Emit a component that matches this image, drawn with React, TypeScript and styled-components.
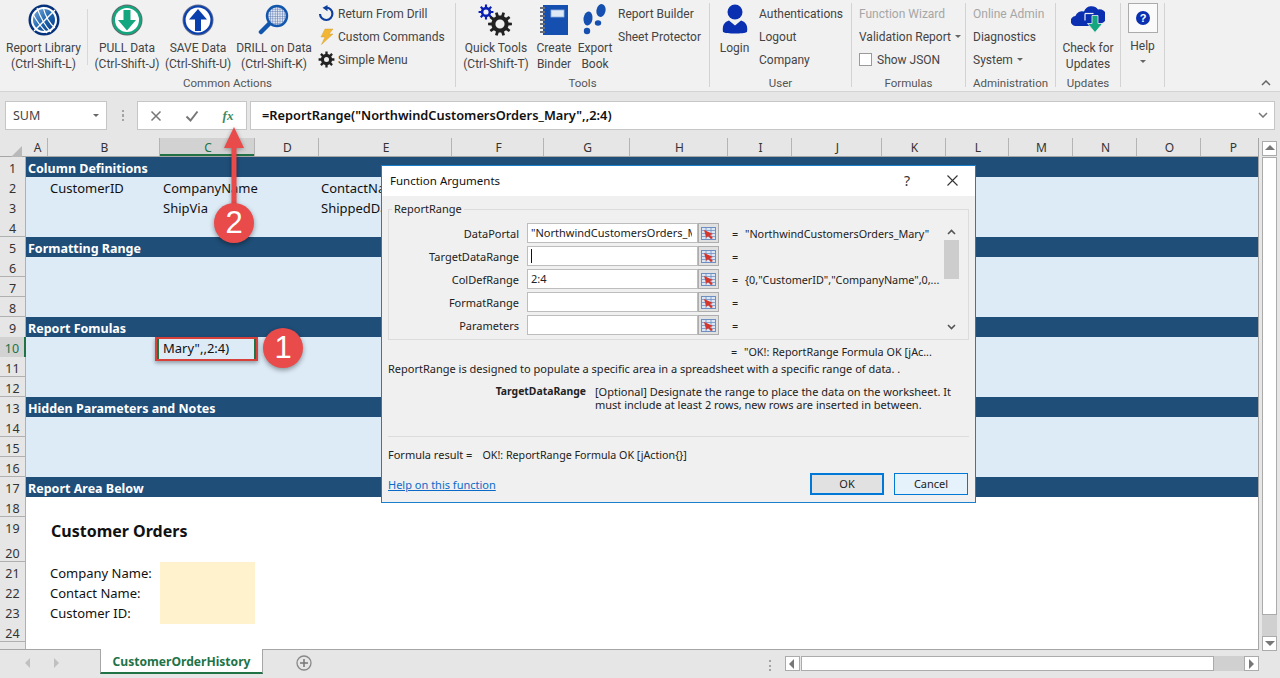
import React from "react";
import styled, { createGlobalStyle } from "styled-components";

const UI_FONT = `"Noto Sans", "Open Sans", sans-serif`;
const RIBBON_FONT = `Roboto, "Noto Sans", sans-serif`;
const BLUE = "#0a3fae";
const TEAL = "#14a67f";

const GlobalStyle = createGlobalStyle`
  html, body {
    margin: 0;
    padding: 0;
    height: 100%;
    overflow: hidden;
    background: #e6e6e6;
    font-family: ${UI_FONT};
  }
  * { box-sizing: border-box; }
`;

/* ---------- icons ---------- */

const gearPath = (cx: number, cy: number, outer: number, inner: number, hole: number, teeth: number) => {
  let d = "";
  const step = (Math.PI * 2) / teeth;
  for (let i = 0; i < teeth; i++) {
    const a = i * step;
    const pts = [
      [inner, a - step * 0.5],
      [inner, a - step * 0.27],
      [outer, a - step * 0.18],
      [outer, a + step * 0.18],
      [inner, a + step * 0.27],
    ];
    pts.forEach(([r, t], j) => {
      const x = (cx + r * Math.cos(t)).toFixed(2);
      const y = (cy + r * Math.sin(t)).toFixed(2);
      d += `${i === 0 && j === 0 ? "M" : "L"}${x} ${y} `;
    });
  }
  d += `Z M${cx + hole} ${cy} A${hole} ${hole} 0 1 0 ${cx - hole} ${cy} A${hole} ${hole} 0 1 0 ${cx + hole} ${cy} Z`;
  return d;
};

const GlobeIcon = () => (
  <svg width="32" height="32" viewBox="0 0 32 32">
    <defs>
      <linearGradient id="globeFill" x1="0" y1="0" x2="1" y2="1">
        <stop offset="0" stopColor="#7fb2e0" />
        <stop offset="0.55" stopColor="#1c62ad" />
        <stop offset="1" stopColor="#06357f" />
      </linearGradient>
    </defs>
    <circle cx="16" cy="16" r="15.5" fill="#06327c" />
    <circle cx="16" cy="16" r="12" fill="url(#globeFill)" stroke="#fff" strokeWidth="2" />
    <g stroke="#fff" strokeWidth="1.1" fill="none">
      <path d="M9 4c3 8 8 18 14 24" />
      <path d="M15 3c2 8 6 16 12 21" />
      <path d="M5 10c4 8 9 14 14 19" />
      <path d="M27 6L6 27" strokeWidth="1.4" />
    </g>
  </svg>
);

const PullIcon = () => (
  <svg width="32" height="32" viewBox="0 0 32 32">
    <circle cx="16" cy="16" r="15.5" fill="#5f6b68" />
    <circle cx="16" cy="16" r="14.6" fill={TEAL} />
    <circle cx="16" cy="16" r="12" fill="#fff" />
    <path d="M12.5 6h7v10h5.5L16 26.5 7 16h5.5z" fill={TEAL} />
  </svg>
);

const SaveIcon = () => (
  <svg width="32" height="32" viewBox="0 0 32 32">
    <circle cx="16" cy="16" r="15.5" fill="#5c6a8c" />
    <circle cx="16" cy="16" r="14.6" fill="#0a3fae" />
    <circle cx="16" cy="16" r="12.4" fill="#fff" />
    <path d="M13 27V15.5H7L16 5l9 10.5h-6V27z" fill={BLUE} />
  </svg>
);

const DrillIcon = () => (
  <svg width="32" height="32" viewBox="0 0 32 32">
    <defs>
      <pattern id="mesh" width="2.4" height="2.4" patternUnits="userSpaceOnUse">
        <rect width="2.4" height="2.4" fill="#dfe6f2" />
        <path d="M0 0h2.4M0 0v2.4" stroke="#4f6fae" strokeWidth="0.9" />
      </pattern>
    </defs>
    <path d="M11 20L3 28" stroke="#1257ad" strokeWidth="4.5" strokeLinecap="round" />
    <circle cx="19" cy="12" r="10" fill="url(#mesh)" stroke="#1257ad" strokeWidth="2.4" />
  </svg>
);

const ReturnIcon = () => (
  <svg width="17" height="17" viewBox="0 0 17 17" fill="none">
    <path d="M8 2.6a6.2 6.2 0 1 1-6 6.4" stroke="#0f3f9e" strokeWidth="2.2" />
    <path d="M9.5 0L4.5 2.8l5 3.4z" fill="#0f3f9e" />
  </svg>
);

const BoltIcon = () => (
  <svg width="17" height="17" viewBox="0 0 17 17">
    <path d="M7 1h8l-4 5h4L3.5 16.5 7 9H3z" fill="#f2b632" stroke="#c9962a" strokeWidth="0.4" />
  </svg>
);

const CogIcon = () => (
  <svg width="17" height="17" viewBox="0 0 17 17">
    <path fillRule="evenodd" d={gearPath(8.5, 8.5, 8, 5.6, 2.5, 8)} fill="#222" />
  </svg>
);

const ToolsIcon = () => (
  <svg width="36" height="34" viewBox="0 0 36 34">
    <path fillRule="evenodd" d={gearPath(8, 8, 7.5, 5.2, 2.6, 8)} fill="#0a1fb4" />
    <path fillRule="evenodd" d={gearPath(22, 20, 12, 8.6, 4.6, 10)} fill="#222" />
  </svg>
);

const BinderIcon = () => (
  <svg width="30" height="32" viewBox="0 0 30 32">
    <rect x="4" y="1" width="25" height="30" fill="#1550b0" />
    <rect x="12" y="6" width="13" height="7" fill="#dfe8f5" stroke="#8fb0de" strokeWidth="0.8" />
    {[4, 8, 12, 16, 20, 24, 28].map((y) => (
      <rect key={y} x="1" y={y - 1} width="5" height="2" fill="#6b6f78" />
    ))}
  </svg>
);

const StepsIcon = () => (
  <svg width="26" height="32" viewBox="0 0 26 32" fill="#1550b0">
    <ellipse cx="6" cy="14.5" rx="4.5" ry="7" transform="rotate(8 6 14.5)" />
    <ellipse cx="5" cy="27" rx="3.2" ry="3.2" />
    <ellipse cx="19" cy="6.5" rx="4.5" ry="6.5" transform="rotate(12 19 6.5)" />
    <ellipse cx="16" cy="19" rx="3.2" ry="2.8" />
  </svg>
);

const UserIcon = () => (
  <svg width="26" height="30" viewBox="0 0 26 30" fill="#0a2fb0">
    <circle cx="13" cy="8" r="7.5" />
    <path d="M1 28c-1-6 1-10 6-11.5l6 5 6-5c5 1.5 7 5.5 6 11.5-3 2-21 2-24 0z" />
  </svg>
);

const CloudIcon = () => (
  <svg width="34" height="30" viewBox="0 0 34 30">
    <path d="M5 22a5 5 0 0 1-.6-10A7 7 0 0 1 13 7.5 8 8 0 0 1 27 5.5a7 7 0 0 1 3 14V22z" fill="#0a2fb0" />
    <path d="M14 9.5h8.5" stroke="#f1f1f1" strokeWidth="1.2" />
    <path d="M14 9.5v7" stroke="#f1f1f1" strokeWidth="1.2" />
    <path d="M21 11.5h6v8h4.5L24 28.5 16.5 19.5H21z" fill={TEAL} stroke="#f1f1f1" strokeWidth="0.8" />
  </svg>
);

const HelpIcon = () => (
  <svg width="16" height="16" viewBox="0 0 16 16">
    <circle cx="8" cy="8" r="7" fill="#0a2fb0" />
    <text x="8" y="12" textAnchor="middle" fontSize="11" fontWeight="700" fill="#fff" fontFamily="Liberation Sans, sans-serif">?</text>
  </svg>
);

const RangeIcon = () => (
  <svg width="15" height="13" viewBox="0 0 15 13">
    <rect x="0.5" y="0.5" width="14" height="12" fill="#dbe6f4" stroke="#6e8fc2" />
    <path d="M0 3.5h15M0 6.5h15M0 9.5h15M5 0v13M10 0v13" stroke="#6e8fc2" strokeWidth="0.8" />
    <path d="M3 3l9 4-3 1 3 3-2 1-3-3-1.5 2z" fill="#d5352a" />
  </svg>
);

const Chevron = ({ up }: { up?: boolean }) => (
  <svg width="9" height="6" viewBox="0 0 9 6">
    <path d={up ? "M1 5l3.5-3.5L8 5" : "M1 1l3.5 3.5L8 1"} fill="none" stroke="#555" strokeWidth="1.6" />
  </svg>
);

const Caret = styled.span`
  display: inline-block;
  width: 0;
  height: 0;
  margin-left: 1px;
  vertical-align: middle;
  border-left: 3px solid transparent;
  border-right: 3px solid transparent;
  border-top: 3px solid #666;
`;

/* ---------- ribbon ---------- */

const Ribbon = styled.div`
  position: relative;
  display: flex;
  height: 92px;
  padding-top: 3px;
  background: #f1f1f1;
  border-bottom: 1px solid #d4d4d4;
  color: #444;
  font-family: ${RIBBON_FONT};
  font-size: 12px;
`;

const Group = styled.div<{ $w: number }>`
  display: flex;
  flex-direction: column;
  flex: none;
  width: ${(p) => p.$w}px;
  height: 84px;
  border-right: 1px solid #d3d3d3;
`;

const GroupBody = styled.div<{ $pad?: number }>`
  display: flex;
  flex: 1;
  padding-left: ${(p) => p.$pad ?? 0}px;
`;

const GroupLabel = styled.div`
  height: 16px;
  margin-bottom: -4px;
  line-height: 16px;
  text-align: center;
  font-size: 11.5px;
  color: #555;
`;

const LargeButton = styled.div<{ $w: number }>`
  display: flex;
  flex-direction: column;
  align-items: center;
  flex: none;
  width: ${(p) => p.$w}px;
  white-space: nowrap;
`;

const LargeIcon = styled.div`
  display: flex;
  align-items: flex-start;
  justify-content: center;
  height: 36px;
  padding-top: 1px;
  margin-bottom: 1px;
`;

const LargeLine = styled.div`
  height: 16px;
  line-height: 16px;
  text-align: center;
`;

const InnerSep = styled.div`
  flex: none;
  width: 1px;
  height: 56px;
  margin-top: 6px;
  background: #d8d8d8;
`;

const SmallColumn = styled.div`
  display: flex;
  flex-direction: column;
  margin-top: -1px;
  white-space: nowrap;
`;

const SmallItem = styled.div<{ $disabled?: boolean }>`
  display: flex;
  align-items: center;
  gap: 3px;
  height: 23px;
  color: ${(p) => (p.$disabled ? "#a6a6a6" : "#444")};
`;

const Checkbox = styled.span`
  display: inline-block;
  width: 13px;
  height: 13px;
  margin-right: 2px;
  background: #fff;
  border: 1px solid #9a9a9a;
`;

const HelpColumn = styled.div`
  display: flex;
  flex-direction: column;
  align-items: center;
  width: 43px;
`;

const HelpBox = styled.div`
  display: flex;
  align-items: center;
  justify-content: center;
  width: 30px;
  height: 30px;
  background: #fafafa;
  border: 1px solid #ababab;
`;

const HelpLabel = styled.div`
  margin-top: 5px;
  line-height: 16px;
`;

const HelpCaret = styled(Caret)`
  margin: 6px 0 0;
`;

const CollapseArrow = styled.svg`
  position: absolute;
  right: 9px;
  bottom: 5px;
`;

/* ---------- formula bar ---------- */

const FormulaBar = styled.div`
  display: flex;
  align-items: stretch;
  height: 46px;
  padding: 9px 5px 8px;
  background: #e6e6e6;
`;

const NameBox = styled.div`
  display: flex;
  align-items: center;
  justify-content: space-between;
  width: 102px;
  padding: 0 7px;
  background: #fff;
  border: 1px solid #c6c6c6;
  color: #444;
  font-size: 12.5px;
`;

const GripDots = styled.div`
  width: 2px;
  height: 11px;
  margin: auto 13px auto 15px;
  background: repeating-linear-gradient(#a3a3a3 0 2px, transparent 2px 4.5px);
`;

const FormulaButtons = styled.div`
  display: flex;
  align-items: center;
  width: 110px;
  margin-right: 3px;
  background: #fff;
  border: 1px solid #c6c6c6;
`;

const FormulaBtn = styled.div`
  display: flex;
  align-items: center;
  justify-content: center;
  flex: 1;
  color: #777;
`;

const FxLabel = styled.span`
  color: #3f8a5e;
  font-family: "Liberation Serif", serif;
  font-style: italic;
  font-weight: 700;
  font-size: 13px;
`;

const FormulaInput = styled.div`
  display: flex;
  align-items: center;
  justify-content: space-between;
  flex: 1;
  padding: 0 6px 2px 11px;
  background: #fff;
  border: 1px solid #c6c6c6;
  color: #111;
  font-size: 12.8px;
  font-weight: 600;
`;

/* ---------- sheet ---------- */

const COLS: [string, number][] = [
  ["A", 22], ["B", 112], ["C", 95], ["D", 64], ["E", 133], ["F", 92], ["G", 86], ["H", 98],
  ["I", 64], ["J", 90], ["K", 64], ["L", 63], ["M", 64], ["N", 64], ["O", 64], ["P", 64],
];

const SheetArea = styled.div`
  display: flex;
  height: 512px;
`;

const SheetMain = styled.div`
  flex: none;
  width: 1259px;
  overflow: hidden;
  border-right: 1px solid #a6a6a6;
  border-bottom: 1px solid #a6a6a6;
`;

const HeaderRow = styled.div`
  display: flex;
  height: 19px;
  border-bottom: 1px solid #a6a6a6;
`;

const Corner = styled.div`
  flex: none;
  width: 26px;
  padding: 3px 0 0 10px;
`;

const ColHead = styled.div<{ $w: number; $active?: boolean }>`
  flex: none;
  width: ${(p) => p.$w}px;
  padding-left: 2px;
  line-height: 20px;
  text-align: center;
  font-size: 12px;
  color: ${(p) => (p.$active ? "#217346" : "#333")};
  background: ${(p) => (p.$active ? "#d2d2d2" : "transparent")};
  border-right: 1px solid #b4b4b4;
  box-shadow: ${(p) => (p.$active ? "inset 0 -2px 0 #217346" : "none")};
`;

const Row = styled.div<{ $h: number; $kind: "band" | "light" | "plain" }>`
  display: grid;
  grid-template-columns: 26px 21px 113px 158px 1fr;
  height: ${(p) => p.$h}px;
  background: ${(p) => (p.$kind === "band" ? "#1f4e78" : p.$kind === "light" ? "#ddebf7" : "#fff")};
`;

const RowHead = styled.div<{ $active?: boolean }>`
  line-height: 24px;
  height: 100%;
  overflow: hidden;
  text-align: center;
  font-size: 12.5px;
  color: ${(p) => (p.$active ? "#217346" : "#333")};
  background: ${(p) => (p.$active ? "#d2d2d2" : "#e6e6e6")};
  border-bottom: 1px solid #b0b0b0;
  border-right: ${(p) => (p.$active ? "2px solid #217346" : "1px solid #b0b0b0")};
`;

const BandText = styled.div`
  grid-column: 2 / -1;
  padding-left: 2px;
  line-height: 24px;
  color: #fff;
  font-size: 12.5px;
  font-weight: 700;
  white-space: nowrap;
`;

const Cell = styled.div`
  padding-left: 3px;
  line-height: 22px;
  font-size: 13px;
  color: #111;
  white-space: nowrap;
`;

const TitleCell = styled(Cell)`
  padding-left: 4px;
  font-size: 16px;
  font-weight: 700;
  line-height: 28px;
`;

const SelectedCell = styled.div`
  position: relative;
  width: 95px;
  padding-left: 3px;
  line-height: 22px;
  font-size: 13px;
  color: #111;
  white-space: nowrap;
  &::after {
    content: "";
    position: absolute;
    inset: 0 -3px -2px -5px;
    border: 2px solid #d8403c;
    box-shadow: inset 2px 0 0 #217346, inset -2px 0 0 #217346, 0 2px 4px rgba(0, 0, 0, 0.35);
  }
`;

const YellowBlock = styled.div`
  width: 95px;
  height: 100%;
  background: #fff2cc;
`;

const VScroll = styled.div`
  display: flex;
  flex-direction: column;
  width: 15px;
  height: 510px;
  margin: 3px 0 0 3px;
`;

const ScrollBtn = styled.div`
  display: flex;
  align-items: center;
  justify-content: center;
  flex: none;
  width: 15px;
  height: 15px;
  background: #fff;
  border: 1px solid #ababab;
`;

const VThumb = styled.div`
  flex: 459 0 0;
  margin-top: 1px;
  background: #fff;
  border: 1px solid #ababab;
`;

const VTrack = styled.div`
  flex: 21 0 0;
  background: #d0d0d0;
`;

/* ---------- sheet tabs ---------- */

const TabBar = styled.div`
  display: flex;
  align-items: flex-start;
  height: 28px;
  background: #e6e6e6;
`;

const TabNav = styled.div`
  display: flex;
  align-items: center;
  gap: 18px;
  width: 100px;
  height: 26px;
  padding-left: 24px;
`;

const Tab = styled.div`
  width: 163px;
  height: 25px;
  line-height: 25px;
  text-align: center;
  background: #fff;
  border-left: 1px solid #a6a6a6;
  border-right: 1px solid #a6a6a6;
  border-bottom: 2px solid #217346;
  margin-top: -1px;
  color: #217346;
  font-size: 12.1px;
  font-weight: 700;
`;

const AddSheet = styled.div`
  display: flex;
  align-items: center;
  width: 522px;
  height: 26px;
  padding-left: 33px;
`;

const HScrollGrip = styled(GripDots)`
  margin: 5px 14px 0 auto;
  height: 11px;
`;

const HScroll = styled.div`
  display: flex;
  align-items: stretch;
  width: 474px;
  height: 15px;
  margin-top: 6px;
`;

const HThumb = styled.div`
  width: 413px;
  background: #fff;
  border: 1px solid #ababab;
  margin-left: 1px;
`;

const HTrack = styled.div`
  flex: 1;
  background: #d0d0d0;
`;

/* ---------- dialog ---------- */

const Dialog = styled.div`
  position: absolute;
  left: 381px;
  top: 165px;
  width: 595px;
  height: 338px;
  display: flex;
  flex-direction: column;
  background: #f0f0f0;
  border: 1px solid #1b7fcc;
  color: #222;
  font-size: 11px;
`;

const DialogTitle = styled.div`
  display: flex;
  align-items: center;
  height: 30px;
  padding: 0 17px 2px 8px;
  background: #fff;
  color: #111;
  font-size: 11.5px;
`;

const DialogTitleText = styled.div`
  flex: 1;
`;

const TitleHelp = styled.div`
  width: 43px;
  font-size: 14px;
  color: #333;
`;

const DialogBody = styled.div`
  display: flex;
  flex-direction: column;
  flex: 1;
  padding: 13px 6px 0;
`;

const ArgsFrame = styled.div`
  position: relative;
  display: flex;
  height: 131px;
  padding: 13px 9px 0 0;
  border: 1px solid #dcdcdc;
`;

const ArgsLegend = styled.div`
  position: absolute;
  left: 3px;
  top: -8px;
  padding: 0 2px;
  line-height: 14px;
  background: #f0f0f0;
`;

const ArgsList = styled.div`
  display: flex;
  flex-direction: column;
  gap: 3px;
  flex: 1;
`;

const ArgRow = styled.div`
  display: grid;
  grid-template-columns: 130px 179px 21px 1fr;
  align-items: center;
  height: 20px;
`;

const ArgLabel = styled.div`
  text-align: right;
`;

const ArgInput = styled.div`
  height: 20px;
  margin-left: 8px;
  padding-left: 3px;
  line-height: 18px;
  background: #fff;
  border: 1px solid #bdbdbd;
`;

const ArgInputText = styled.div`
  width: 161px;
  overflow: hidden;
  white-space: nowrap;
`;

const TextCursor = styled.span`
  display: inline-block;
  width: 1px;
  height: 14px;
  margin-top: 2px;
  background: #111;
`;

const RangeBtn = styled.div`
  display: flex;
  align-items: center;
  justify-content: center;
  height: 20px;
  background: #e1e1e1;
  border: 1px solid #adadad;
`;

const ArgValue = styled.div`
  display: grid;
  grid-template-columns: 13px 1fr;
  padding-left: 13px;
  font-size: 10.8px;
  white-space: nowrap;
  overflow: hidden;
`;

const ArgScroll = styled.div`
  display: flex;
  flex-direction: column;
  align-items: center;
  width: 15px;
  height: 112px;
`;

const ArgThumb = styled.div`
  width: 15px;
  height: 39px;
  background: #cdcdcd;
`;

const ScrollChevron = styled.div`
  display: flex;
  align-items: center;
  justify-content: center;
  height: 17px;
`;

const ScrollSpacer = styled.div`
  flex: 1;
`;

const ResultLine = styled(ArgValue)`
  margin: 5px 0 0 330px;
  width: 250px;
  line-height: 14px;
`;

const Description = styled.div`
  margin-top: 2px;
  line-height: 16px;
`;

const ArgHelp = styled.div`
  display: grid;
  grid-template-columns: 198px 1fr;
  gap: 9px;
  margin-top: 8px;
  height: 51px;
  line-height: 13px;
`;

const ArgHelpName = styled.div`
  text-align: right;
  font-size: 10.4px;
  font-weight: 700;
`;

const Divider = styled.div`
  height: 1px;
  background: #dcdcdc;
`;

const FormulaResult = styled.div`
  display: flex;
  gap: 10px;
  margin-top: 11px;
  line-height: 14px;
`;

const ResultValue = styled.span`
  font-size: 10.7px;
`;

const DialogFoot = styled.div`
  display: flex;
  align-items: center;
  justify-content: space-between;
  margin-top: 11px;
  padding-right: 1px;
`;

const HelpLink = styled.div`
  color: #0b6ac8;
  text-decoration: underline;
`;

const FootButtons = styled.div`
  display: flex;
  gap: 10px;
`;

const DialogButton = styled.div<{ $primary?: boolean }>`
  width: 74px;
  height: 22px;
  line-height: 18px;
  text-align: center;
  background: ${(p) => (p.$primary ? "#e1e1e1" : "#e5f1fb")};
  border: ${(p) => (p.$primary ? "2px solid #0078d7" : "1px solid #0078d7")};
  padding-top: ${(p) => (p.$primary ? 0 : 1)}px;
`;

/* ---------- annotations ---------- */

const Callout = styled.div<{ $x: number; $y: number }>`
  position: absolute;
  left: ${(p) => p.$x - 20}px;
  top: ${(p) => p.$y - 20}px;
  width: 40px;
  height: 40px;
  line-height: 39px;
  text-align: center;
  border-radius: 50%;
  background: #e94b4b;
  box-shadow: 0 2px 5px rgba(0, 0, 0, 0.4);
  color: #fff;
  font-family: "Liberation Sans", sans-serif;
  font-size: 31px;
`;

const ArrowSvg = styled.svg`
  position: absolute;
  left: 219px;
  top: 124px;
  filter: drop-shadow(0 1px 2px rgba(0, 0, 0, 0.35));
`;

/* ---------- data ---------- */

type RowDef = { n: number; kind: "band" | "light" | "plain"; h?: number; text?: string };

const ROWS: RowDef[] = [
  { n: 1, kind: "band", text: "Column Definitions" },
  { n: 2, kind: "light" }, { n: 3, kind: "light" }, { n: 4, kind: "light" },
  { n: 5, kind: "band", text: "Formatting Range" },
  { n: 6, kind: "light" }, { n: 7, kind: "light" }, { n: 8, kind: "light" },
  { n: 9, kind: "band", text: "Report Fomulas" },
  { n: 10, kind: "light" }, { n: 11, kind: "light" }, { n: 12, kind: "light" },
  { n: 13, kind: "band", text: "Hidden Parameters and Notes" },
  { n: 14, kind: "light" }, { n: 15, kind: "light" }, { n: 16, kind: "light" },
  { n: 17, kind: "band", text: "Report Area Below" },
  { n: 18, kind: "plain" }, { n: 19, kind: "plain", h: 25 }, { n: 20, kind: "plain" },
  { n: 21, kind: "plain" }, { n: 22, kind: "plain" }, { n: 23, kind: "plain" }, { n: 24, kind: "plain" },
  { n: 25, kind: "plain" },
];

const ROW_CELLS: Record<number, [string, string, string]> = {
  2: ["CustomerID", "CompanyName", "ContactName"],
  3: ["", "ShipVia", "ShippedDate"],
};

const ARGS = [
  { label: "DataPortal", input: "\"NorthwindCustomersOrders_Mary\"", value: "\"NorthwindCustomersOrders_Mary\"" },
  { label: "TargetDataRange", input: "", cursor: true, value: "" },
  { label: "ColDefRange", input: "2:4", value: "{0,\"CustomerID\",\"CompanyName\",0,..." },
  { label: "FormatRange", input: "", value: "" },
  { label: "Parameters", input: "", value: "" },
];

const Tri = ({ dir, color = "#777" }: { dir: "up" | "down" | "left" | "right"; color?: string }) => {
  const pts = { up: "0,6 5,1 10,6", down: "0,2 10,2 5,7", left: "6,0 6,10 1,5", right: "2,0 2,10 7,5" }[dir];
  return (
    <svg width="10" height="10" viewBox="0 0 10 10">
      <polygon points={pts} fill={color} />
    </svg>
  );
};

const renderRowBody = (row: RowDef) => {
  if (row.kind === "band") return <BandText>{row.text}</BandText>;
  const base = ROW_CELLS[row.n];
  if (base) {
    return (
      <>
        <span />
        <Cell>{base[0]}</Cell>
        <Cell>{base[1]}</Cell>
        <Cell>{base[2]}</Cell>
      </>
    );
  }
  if (row.n === 10) {
    return (
      <>
        <span />
        <span />
        <SelectedCell>Mary",,2:4)</SelectedCell>
      </>
    );
  }
  if (row.n === 19) {
    return (
      <>
        <span />
        <TitleCell>Customer Orders</TitleCell>
      </>
    );
  }
  const labels: Record<number, string> = { 21: "Company Name:", 22: "Contact Name:", 23: "Customer ID:" };
  if (labels[row.n]) {
    return (
      <>
        <span />
        <Cell>{labels[row.n]}</Cell>
        <YellowBlock />
      </>
    );
  }
  return null;
};

export default function App() {
  return (
    <>
      <GlobalStyle />
      <Ribbon>
        <Group $w={456}>
          <GroupBody>
            <LargeButton $w={87}>
              <LargeIcon><GlobeIcon /></LargeIcon>
              <LargeLine>Report Library</LargeLine>
              <LargeLine>(Ctrl-Shift-L)</LargeLine>
            </LargeButton>
            <InnerSep />
            <LargeButton $w={78}>
              <LargeIcon><PullIcon /></LargeIcon>
              <LargeLine>PULL Data</LargeLine>
              <LargeLine>(Ctrl-Shift-J)</LargeLine>
            </LargeButton>
            <LargeButton $w={64}>
              <LargeIcon><SaveIcon /></LargeIcon>
              <LargeLine>SAVE Data</LargeLine>
              <LargeLine>(Ctrl-Shift-U)</LargeLine>
            </LargeButton>
            <LargeButton $w={88}>
              <LargeIcon><DrillIcon /></LargeIcon>
              <LargeLine>DRILL on Data</LargeLine>
              <LargeLine>(Ctrl-Shift-K)</LargeLine>
            </LargeButton>
            <SmallColumn>
              <SmallItem><ReturnIcon />Return From Drill</SmallItem>
              <SmallItem><BoltIcon />Custom Commands</SmallItem>
              <SmallItem><CogIcon />Simple Menu</SmallItem>
            </SmallColumn>
          </GroupBody>
          <GroupLabel>Common Actions</GroupLabel>
        </Group>

        <Group $w={254}>
          <GroupBody>
            <LargeButton $w={80}>
              <LargeIcon><ToolsIcon /></LargeIcon>
              <LargeLine>Quick Tools</LargeLine>
              <LargeLine>(Ctrl-Shift-T)</LargeLine>
            </LargeButton>
            <LargeButton $w={36}>
              <LargeIcon><BinderIcon /></LargeIcon>
              <LargeLine>Create</LargeLine>
              <LargeLine>Binder</LargeLine>
            </LargeButton>
            <LargeButton $w={46}>
              <LargeIcon><StepsIcon /></LargeIcon>
              <LargeLine>Export</LargeLine>
              <LargeLine>Book</LargeLine>
            </LargeButton>
            <SmallColumn>
              <SmallItem>Report Builder</SmallItem>
              <SmallItem>Sheet Protector</SmallItem>
            </SmallColumn>
          </GroupBody>
          <GroupLabel>Tools</GroupLabel>
        </Group>

        <Group $w={142}>
          <GroupBody>
            <LargeButton $w={49}>
              <LargeIcon><UserIcon /></LargeIcon>
              <LargeLine>Login</LargeLine>
            </LargeButton>
            <SmallColumn>
              <SmallItem>Authentications</SmallItem>
              <SmallItem>Logout</SmallItem>
              <SmallItem>Company</SmallItem>
            </SmallColumn>
          </GroupBody>
          <GroupLabel>User</GroupLabel>
        </Group>

        <Group $w={114}>
          <GroupBody $pad={7}>
            <SmallColumn>
              <SmallItem $disabled>Function Wizard</SmallItem>
              <SmallItem>Validation Report<Caret /></SmallItem>
              <SmallItem><Checkbox />Show JSON</SmallItem>
            </SmallColumn>
          </GroupBody>
          <GroupLabel>Formulas</GroupLabel>
        </Group>

        <Group $w={90}>
          <GroupBody $pad={7}>
            <SmallColumn>
              <SmallItem $disabled>Online Admin</SmallItem>
              <SmallItem>Diagnostics</SmallItem>
              <SmallItem>System<Caret /></SmallItem>
            </SmallColumn>
          </GroupBody>
          <GroupLabel>Administration</GroupLabel>
        </Group>

        <Group $w={65}>
          <GroupBody>
            <LargeButton $w={64}>
              <LargeIcon><CloudIcon /></LargeIcon>
              <LargeLine>Check for</LargeLine>
              <LargeLine>Updates</LargeLine>
            </LargeButton>
          </GroupBody>
          <GroupLabel>Updates</GroupLabel>
        </Group>

        <Group $w={44}>
          <HelpColumn>
            <HelpBox><HelpIcon /></HelpBox>
            <HelpLabel>Help</HelpLabel>
            <HelpCaret />
          </HelpColumn>
        </Group>

        <CollapseArrow width="10" height="6" viewBox="0 0 10 6">
          <path d="M1 5l4-4 4 4" fill="none" stroke="#666" strokeWidth="1.5" />
        </CollapseArrow>
      </Ribbon>

      <FormulaBar>
        <NameBox>SUM<Caret /></NameBox>
        <GripDots />
        <FormulaButtons>
          <FormulaBtn>
            <svg width="12" height="12" viewBox="0 0 12 12">
              <path d="M1.5 1.5l9 9M10.5 1.5l-9 9" stroke="#777" strokeWidth="1.5" />
            </svg>
          </FormulaBtn>
          <FormulaBtn>
            <svg width="14" height="12" viewBox="0 0 14 12">
              <path d="M1.5 6.5l4 4 7-9" fill="none" stroke="#777" strokeWidth="2" />
            </svg>
          </FormulaBtn>
          <FormulaBtn><FxLabel>fx</FxLabel></FormulaBtn>
        </FormulaButtons>
        <FormulaInput>
          =ReportRange("NorthwindCustomersOrders_Mary",,2:4)
          <svg width="10" height="6" viewBox="0 0 10 6">
            <path d="M1 1l4 4 4-4" fill="none" stroke="#777" strokeWidth="1.5" />
          </svg>
        </FormulaInput>
      </FormulaBar>

      <SheetArea>
        <SheetMain>
          <HeaderRow>
            <Corner>
              <svg width="12" height="12" viewBox="0 0 12 12">
                <polygon points="12,0 12,12 0,12" fill="#b9b9b9" />
              </svg>
            </Corner>
            {COLS.map(([name, w]) => (
              <ColHead key={name} $w={w} $active={name === "C"}>{name}</ColHead>
            ))}
          </HeaderRow>
          {ROWS.map((row) => (
            <Row key={row.n} $h={row.h ?? 20} $kind={row.kind}>
              <RowHead $active={row.n === 10}>{row.n}</RowHead>
              {renderRowBody(row)}
            </Row>
          ))}
        </SheetMain>
        <VScroll>
          <ScrollBtn><Tri dir="up" /></ScrollBtn>
          <VThumb />
          <VTrack />
          <ScrollBtn><Tri dir="down" /></ScrollBtn>
        </VScroll>
      </SheetArea>

      <TabBar>
        <TabNav>
          <Tri dir="left" color="#c0c0c0" />
          <Tri dir="right" color="#c0c0c0" />
        </TabNav>
        <Tab>CustomerOrderHistory</Tab>
        <AddSheet>
          <svg width="16" height="16" viewBox="0 0 16 16">
            <circle cx="8" cy="8" r="7" fill="none" stroke="#888" strokeWidth="1.3" />
            <path d="M8 4v8M4 8h8" stroke="#777" strokeWidth="1.5" />
          </svg>
          <HScrollGrip />
        </AddSheet>
        <HScroll>
          <ScrollBtn><Tri dir="left" /></ScrollBtn>
          <HThumb />
          <HTrack />
          <ScrollBtn><Tri dir="right" /></ScrollBtn>
        </HScroll>
      </TabBar>

      <Dialog>
        <DialogTitle>
          <DialogTitleText>Function Arguments</DialogTitleText>
          <TitleHelp>?</TitleHelp>
          <svg width="11" height="11" viewBox="0 0 11 11">
            <path d="M0.5 0.5l10 10M10.5 0.5l-10 10" stroke="#333" strokeWidth="1.1" />
          </svg>
        </DialogTitle>
        <DialogBody>
          <ArgsFrame>
            <ArgsLegend>ReportRange</ArgsLegend>
            <ArgsList>
              {ARGS.map((arg) => (
                <ArgRow key={arg.label}>
                  <ArgLabel>{arg.label}</ArgLabel>
                  <ArgInput>
                    {arg.cursor ? <TextCursor /> : <ArgInputText>{arg.input}</ArgInputText>}
                  </ArgInput>
                  <RangeBtn><RangeIcon /></RangeBtn>
                  <ArgValue><span>=</span><span>{arg.value}</span></ArgValue>
                </ArgRow>
              ))}
            </ArgsList>
            <ArgScroll>
              <ScrollChevron><Chevron up /></ScrollChevron>
              <ArgThumb />
              <ScrollSpacer />
              <ScrollChevron><Chevron /></ScrollChevron>
            </ArgScroll>
          </ArgsFrame>
          <ResultLine><span>=</span><span>"OK!: ReportRange Formula OK [jAc...</span></ResultLine>
          <Description>ReportRange is designed to populate a specific area in a spreadsheet with a specific range of data. .</Description>
          <ArgHelp>
            <ArgHelpName>TargetDataRange</ArgHelpName>
            <div>[Optional] Designate the range to place the data on the worksheet. It must include at least 2 rows, new rows are inserted in between.</div>
          </ArgHelp>
          <Divider />
          <FormulaResult>
            <span>Formula result =</span>
            <ResultValue>OK!: ReportRange Formula OK [jAction{"{}"}]</ResultValue>
          </FormulaResult>
          <DialogFoot>
            <HelpLink>Help on this function</HelpLink>
            <FootButtons>
              <DialogButton $primary>OK</DialogButton>
              <DialogButton>Cancel</DialogButton>
            </FootButtons>
          </DialogFoot>
        </DialogBody>
      </Dialog>

      <ArrowSvg width="30" height="90" viewBox="0 0 30 90">
        <path d="M15 3L25 24H17.5V85H12.5V24H5z" fill="#e94b4b" />
      </ArrowSvg>
      <Callout $x={234} $y={223}>2</Callout>
      <Callout $x={283} $y={348}>1</Callout>
    </>
  );
}
